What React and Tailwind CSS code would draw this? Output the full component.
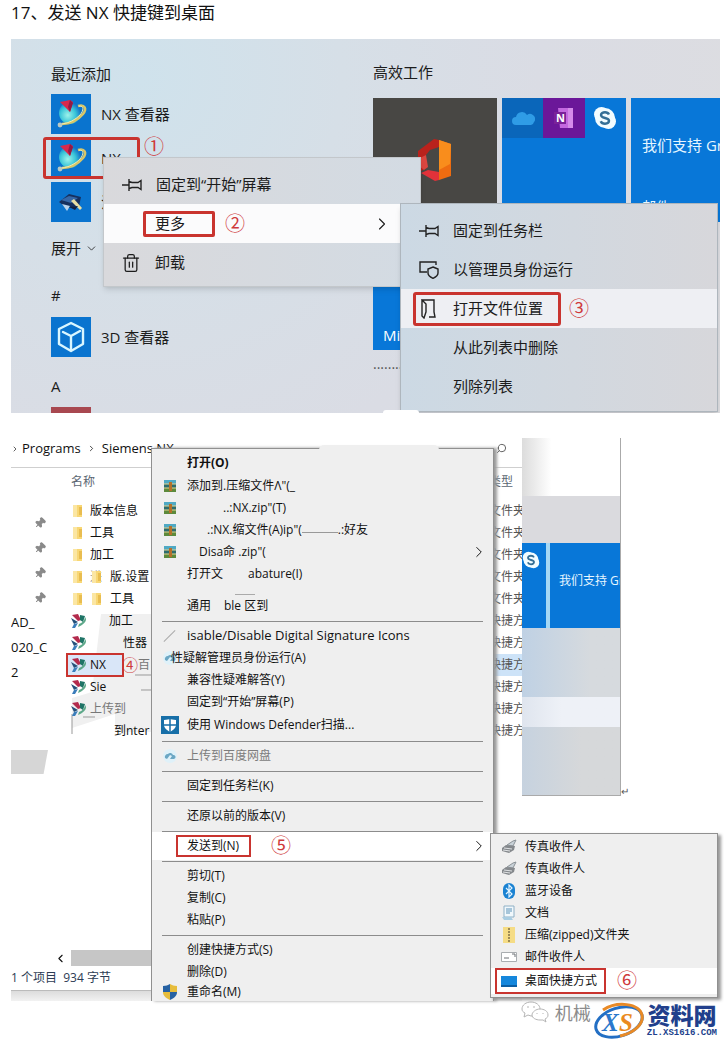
import React from 'react';
import { Pin, Search, ChevronDown, ChevronRight, ChevronLeft, Trash2 } from 'lucide-react';

const fileRows = [
  { icon: 'folder', name: '版本信息', type: '文件夹' },
  { icon: 'folder', name: '工具', type: '文件夹' },
  { icon: 'folder', name: '加工', type: '文件夹' },
  { icon: 'folder', prefix: '进', second: true, name: '版.设置', type: '文件夹' },
  { icon: 'folder', second: true, name: '工具', type: '文件夹' },
  { icon: 'nx', name: '加工', pad: 'pl-[19px]', type: '快捷方式' },
  { icon: 'nx', name: '性器', pad: 'pl-[33px]', type: '快捷方式' },
  { icon: 'nx', name: 'NX', selected: true, type: '快捷方式' },
  { icon: 'nx', name: 'Sie', type: '快捷方式' },
  { icon: 'nx', name: '上传到', muted: true, type: '快捷方式' },
  { name: '到nter', pad: 'pl-[24px]', type: '快捷方式' },
];

const sendTargets = [
  { icon: 'fax', label: '传真收件人' },
  { icon: 'fax', label: '传真收件人' },
  { icon: 'bluetooth', label: '蓝牙设备' },
  { icon: 'doc', label: '文档' },
  { icon: 'zip', label: '压缩(zipped)文件夹' },
  { icon: 'mail', label: '邮件收件人' },
];

const NxLogo = () => (
  <svg viewBox="0 0 40 40" className="size-10 shrink-0 bg-[#0a74cf]">
    <defs>
      <radialGradient id="nxball" cx="0.4" cy="0.6" r="0.6">
        <stop offset="0" stopColor="#9df3ea" />
        <stop offset="0.6" stopColor="#38c4d8" />
        <stop offset="1" stopColor="#1273c8" />
      </radialGradient>
    </defs>
    <ellipse cx="19" cy="19" rx="11" ry="11" fill="url(#nxball)" />
    <path d="M9 8l10-2 3 2-3 10z" fill="#d8284c" />
    <path d="M19 6l3 3-3 9-2-5z" fill="#931a45" />
    <path d="M27 12c7-2 9 3 5 8-5 6-13 10-21 10" fill="none" stroke="#d8c668" strokeWidth="2.6" />
    <path d="M28 12c5 0 5 4 1 9-5 5-11 8-18 9" fill="none" stroke="#f1eeb0" strokeWidth="1" />
    <circle cx="9" cy="31" r="2.4" fill="#b9c9c4" />
  </svg>
);

const ToolLogo = () => (
  <svg viewBox="0 0 40 40" className="size-10 shrink-0 bg-[#0a74cf]">
    <path d="M8 20l10-8 12 3-2 9-12 2z" fill="#16305f" />
    <path d="M10 18l8-4 9 2-7 5z" fill="#3567a8" />
    <path d="M11 22l5 7 3-5z" fill="#b9d4ee" />
    <path d="M20 19l9 9 2-2-8-9z" fill="#e8dfa4" />
    <path d="M18 25l6 3 3-4z" fill="#102040" />
  </svg>
);

const CubeLogo = () => (
  <svg viewBox="0 0 40 40" className="size-10 shrink-0 bg-[#0a74cf]" fill="none" stroke="#d9f6ff" strokeWidth="2.4" strokeLinejoin="round" strokeLinecap="round">
    <path d="M20 6l12 6v15l-12 7-12-7V12z" />
    <path d="M12 15l8 4 9-5M20 19v14" />
  </svg>
);

const OfficeLogo = () => (
  <svg viewBox="0 0 40 46" className="h-[46px] w-10">
    <path d="M3 14L19 2l5 1v7l-9 3-4 5v13l-5 3-3-6z" fill="#b9221c" />
    <path d="M3 28l6 5 4-3-2-12-8 4z" fill="#d9463f" />
    <path d="M24 3l12 4v32l-12 4z" fill="#ee6c10" />
    <path d="M24 3l12 4-1 20-11 6z" fill="#f98d1c" />
    <path d="M6 36l7-3 11 2v8l-4 1z" fill="#e1323a" />
  </svg>
);

const SkypeLogo = ({ className }) => (
  <svg viewBox="0 0 24 24" className={className}>
    <circle cx="8.5" cy="8.5" r="7.5" fill="#f2fcff" />
    <circle cx="15.5" cy="15.5" r="7.5" fill="#f2fcff" />
    <circle cx="12" cy="12" r="10" fill="#f2fcff" />
    <path d="M16 8.500c-.8-1.600-2.300-2.200-4-2.200-2.300 0-4 1-4 2.800 0 4 8 1.800 8 5.700 0 1.900-1.800 2.900-4 2.900-2 0-3.600-.8-4.300-2.500" fill="none" stroke="#356f96" strokeWidth="2.400" />
  </svg>
);

const PushPin = () => (
  <svg viewBox="0 0 20 16" className="h-4 w-5 shrink-0" fill="none" stroke="#222" strokeWidth="1.4">
    <path d="M0 8h7M7 2v12M7 4.500l3 1h6l3-2v9l-3-2h-6l-3 1" />
  </svg>
);

const AdminShield = () => (
  <svg viewBox="0 0 20 18" className="h-[18px] w-5 shrink-0" fill="none" stroke="#222" strokeWidth="1.4">
    <path d="M8 11H1V8M1 8V1h16v3M1 11V8" />
    <path d="M14 6l5 2v4c0 2.500-2 4-5 5.300-3-1.300-5-2.800-5-5.300V8z" />
  </svg>
);

const OpenFolder = () => (
  <svg viewBox="0 0 20 20" className="size-5 shrink-0" fill="none" stroke="#222" strokeWidth="1.4">
    <path d="M3 1h12v12l1 5h-6M3 1l4 4v8l-2 6-2-2z" />
  </svg>
);

const FolderIcon = () => (
  <svg viewBox="0 0 14 16" className="h-4 w-[14px] shrink-0">
    <path d="M2 2h9v12H2z" fill="#f8d775" />
    <path d="M2 2h4v12H2z" fill="#fbe6a3" />
    <path d="M8 4h3v8H8z" fill="#e9bd50" />
  </svg>
);

const NxFileIcon = () => (
  <svg viewBox="0 0 16 16" className="size-4 shrink-0">
    <path d="M1 2l6-1 3 6-3 1z" fill="#b32b4d" />
    <path d="M9 2l5 1-2 6-3-2z" fill="#1f7466" />
    <path d="M0 5l7 4-4 2z" fill="#24507a" />
    <path d="M7 10l-3 5H1l2-4z" fill="#3a7dbb" />
    <path d="M14 4c3 3-1 8-7 10l1-3c3-1 6-4 6-7z" fill="#5da889" />
  </svg>
);

const RarIcon = () => (
  <svg viewBox="0 0 14 14" className="size-[14px]">
    <path d="M1 1h12v4H1z" fill="#4fa9c4" />
    <path d="M1 5h12v4H1z" fill="#2d6d6e" />
    <path d="M1 9h12v4H1z" fill="#5d8a3c" />
    <path d="M1 4.500h12v1H1zM1 8.500h12v1H1z" fill="#e8d58c" />
    <path d="M6 3h3v9H6z" fill="#b5702a" />
  </svg>
);

const CloudIcon = () => (
  <svg viewBox="0 0 16 16" className="size-4">
    <circle cx="8" cy="8" r="7" fill="#dff1f9" />
    <path d="M3 10a3 3 0 013-4 3 3 0 015 1 2 2 0 011 4H8l2-3-2-1-3 4z" fill="#6ba7c4" />
  </svg>
);

const DefenderIcon = () => (
  <svg viewBox="0 0 18 18" className="size-[18px]">
    <path d="M0 0h18v18H0z" fill="#176fa8" />
    <path d="M3 4c3 0 5-1 6-1s3 1 6 1v5c0 3-3 5-6 7-3-2-6-4-6-7z" fill="#fff" />
    <path d="M9 3v13M3 9h12" stroke="#176fa8" strokeWidth="1.500" />
  </svg>
);

const ShieldIcon = () => (
  <svg viewBox="0 0 16 16" className="size-4">
    <path d="M8 0v8H1V2c3 0 5-1 7-2z" fill="#2762a3" />
    <path d="M8 0v8h7V2c-3 0-5-1-7-2z" fill="#e7bd3c" />
    <path d="M8 8v8c-4-2-7-4-7-8z" fill="#e7bd3c" />
    <path d="M8 8v8c4-2 7-4 7-8z" fill="#2762a3" />
  </svg>
);

const TargetIcon = ({ type }) => {
  if (type === 'fax') {
    return (
      <svg viewBox="0 0 16 16" className="size-4 shrink-0">
        <path d="M6 6l6-4 3-1-3 6z" fill="#c9d2d8" stroke="#8b9297" />
        <path d="M1 9l4-3 9 1-1 4-5 3-7-2z" fill="#85898d" />
        <path d="M3 9l8 1M2 11l7 1" stroke="#dfe2e4" />
      </svg>
    );
  }
  if (type === 'bluetooth') {
    return (
      <svg viewBox="0 0 16 16" className="size-4 shrink-0">
        <rect x="2" width="12" height="16" rx="6" fill="#1a82d2" />
        <path d="M5 5l6 6-3 3V2l3 3-6 6" fill="none" stroke="#e3f4ff" strokeWidth="1.200" />
      </svg>
    );
  }
  if (type === 'doc') {
    return (
      <svg viewBox="0 0 16 16" className="size-4 shrink-0">
        <path d="M3 1h10v11H3z" fill="#f1f8fc" stroke="#8fb0c5" />
        <path d="M5 4h6M5 6h6M5 8h4" stroke="#5d93b8" />
        <path d="M1 12h9l2 3H3z" fill="#a9cde2" />
      </svg>
    );
  }
  if (type === 'zip') {
    return (
      <svg viewBox="0 0 16 16" className="size-4 shrink-0">
        <path d="M2 0h12v16H2z" fill="#f5dc85" />
        <path d="M8 1v14" stroke="#9d8b55" strokeWidth="2" strokeDasharray="2 1" />
      </svg>
    );
  }
  if (type === 'mail') {
    return (
      <svg viewBox="0 0 16 16" className="size-4 shrink-0">
        <path d="M.5 3.500h15v9H.5z" fill="#fff" stroke="#a9adb0" />
        <path d="M11 5h3v3M3 9h5" fill="none" stroke="#6c7175" />
      </svg>
    );
  }
  return (
    <svg viewBox="0 0 16 16" className="size-4 shrink-0">
      <path d="M0 3h16v11H0z" fill="#1587dc" />
      <path d="M0 12h16v2H0z" fill="#0b5ea3" />
    </svg>
  );
};

const Step = ({ children, className = '', size = 'text-xl' }) => (
  <span className={`${size} leading-none text-[#cf3a3c] ${className}`}>{children}</span>
);

const Separator = () => <hr className="mx-[10px] mt-1 mb-[3px] border-t border-[#8c8c8c]" />;

const MenuRow = ({ icon, children, className = 'h-[22px]' }) => (
  <button type="button" className={`flex w-full items-center text-left whitespace-nowrap ${className}`}>
    <span className="flex w-[35px] shrink-0 justify-center">{icon}</span>
    {children}
  </button>
);

const StartMenu = () => (
  <section className="relative flex overflow-hidden bg-[radial-gradient(circle_at_130px_40px,#cfe2ec_0%,#d6dfe7_30%,#dadce4_60%,#dddde0_100%)] text-[15px] text-[#1c1c1c]">
    <div className="w-[362px] shrink-0 pt-[15px] pl-10">
      <h2 className="flex h-10 items-center">最近添加</h2>
      <ul className="flex flex-col gap-1">
        <li className="flex items-center gap-[10px]"><NxLogo />NX 查看器</li>
        <li className="flex items-center gap-[10px]"><NxLogo />NX</li>
        <li className="flex items-center gap-[10px]"><ToolLogo />注</li>
      </ul>
      <button type="button" className="flex h-[52px] items-center gap-1">
        展开 <ChevronDown size={13} strokeWidth={1.5} />
      </button>
      <h3 className="flex h-[43px] items-center">#</h3>
      <div className="flex items-center gap-[10px]"><CubeLogo />3D 查看器</div>
      <h3 className="flex h-[50px] items-center pt-2">A</h3>
      <div className="h-[6px] w-10 bg-[#a84850]" />
    </div>

    <div className="min-w-0 flex-1 overflow-hidden pt-[13px]">
      <h2 className="flex h-10 items-center">高效工作</h2>
      <div className="mt-[6px] grid grid-cols-[124px_124px_124px] gap-x-[5px] gap-y-1">
        <div className="flex h-[124px] items-center justify-center bg-[#484744]"><OfficeLogo /></div>
        <div className="h-[124px] bg-[#0877d8]">
          <div className="grid h-10 grid-cols-3">
            <span className="flex items-center justify-center bg-[#0a66ba]">
              <svg viewBox="0 0 24 16" className="h-4 w-6">
                <path d="M5 15a4 4 0 010-8 6 6 0 0111-2 5 5 0 017 7 4 4 0 01-3 3z" fill="#2f9ce6" />
              </svg>
            </span>
            <span className="flex items-center justify-center bg-[#6b1799]">
              <svg viewBox="0 0 24 24" className="size-6">
                <path d="M6 2h15v20H8z" fill="#c468e0" />
                <path d="M16 2h5v20h-5z" fill="#d58bea" />
                <path d="M2 6h12v12H2z" fill="#7a2299" />
                <text x="4" y="16" fontSize="11" fontWeight="700" fill="#fff">N</text>
              </svg>
            </span>
            <span className="flex items-center justify-center"><SkypeLogo className="size-6" /></span>
          </div>
        </div>
        <div className="flex h-[124px] flex-col bg-[#0877d8] pt-9 pl-[11px] whitespace-nowrap text-[#e6f6ff]">
          <span>我们支持 Gr</span>
          <span className="mt-10 text-sm">邮件</span>
        </div>
        <div className="flex h-[124px] items-end bg-[#0877d8] pb-1 pl-[10px] text-white">Mi</div>
      </div>
      <p className="h-[34px] pt-1 text-sm text-[#555]">...........</p>
    </div>

    {/* step 1 highlight */}
    <div className="absolute top-[98px] left-8 h-[42px] w-[97px] rounded-[3px] border-[3px] border-[#c9342f]" />
    <Step className="absolute top-[98px] left-[133px]">①</Step>

    <div className="absolute top-[118px] left-[92px] w-[318px] border border-[#c3c7cb] bg-linear-to-r from-[#d9d9dc] to-[#d3dbe3] pt-[7px] pb-1 shadow-md">
      <button type="button" className="flex h-[39px] w-full items-center gap-[14px] pl-[18px]"><PushPin />固定到“开始”屏幕</button>
      <button type="button" className="flex h-[39px] w-full items-center bg-[#fbfbfc] pr-7 pl-[39px]">
        <span className="flex h-[26px] w-[72px] items-center rounded-[2px] border-[3px] border-[#c9342f] pl-[9px]">更多</span>
        <Step className="ml-[10px]">②</Step>
        <ChevronRight size={20} strokeWidth={1.3} className="ml-auto" />
      </button>
      <button type="button" className="flex h-[39px] w-full items-center gap-[14px] pl-[17px]"><Trash2 size={20} strokeWidth={1.5} />卸载</button>
    </div>

    <div className="absolute top-[164px] left-[389px] w-[318px] border border-[#aeb6bd] bg-linear-to-r from-[#ccd9e4] to-[#d7d7db] pt-[7px] pb-[5px] shadow-md">
      <button type="button" className="flex h-[39px] w-full items-center gap-[14px] pl-[18px]"><PushPin />固定到任务栏</button>
      <button type="button" className="flex h-[39px] w-full items-center gap-[14px] pl-[18px]"><AdminShield />以管理员身份运行</button>
      <button type="button" className="flex h-[39px] w-full items-center bg-[#eeeff3] pl-3">
        <span className="flex h-[34px] w-[148px] items-center gap-[14px] rounded-[3px] border-[3px] border-[#c9342f] pl-[3px]">
          <OpenFolder />打开文件位置
        </span>
        <Step className="ml-2">③</Step>
      </button>
      <button type="button" className="flex h-[39px] w-full items-center pl-[52px]">从此列表中删除</button>
      <button type="button" className="flex h-[39px] w-full items-center pl-[52px]">列除列表</button>
    </div>
    <div className="absolute bottom-0 left-[372px] h-[3px] w-9 rounded-t-full bg-white" />
  </section>
);

const FileName = ({ row }) => (
  <div className={`relative flex h-[22px] items-center whitespace-nowrap ${row.muted ? 'text-[#777]' : ''}`}>
    {row.selected && <span className="absolute -left-[5px] h-6 w-[58px] border-2 border-[#c9342f] bg-[#d9e6f8]" />}
    <span className="relative flex w-[19px] shrink-0">
      {row.icon === 'folder' && <FolderIcon />}
      {row.icon === 'nx' && <NxFileIcon />}
    </span>
    {row.prefix && <span className="w-0 text-[#999]">{row.prefix}</span>}
    {row.second && <span className="flex w-5"><FolderIcon /></span>}
    <span className={`relative ${row.pad || ''}`}>{row.name}</span>
    {row.selected && (
      <>
        <Step size="text-base" className="relative ml-4">④</Step>
        <span className="relative text-[#777]">百</span>
      </>
    )}
  </div>
);

const Explorer = () => (
  <div className="flex w-[511px] flex-col [grid-area:1/1]">
    <nav className="flex h-[30px] items-center border-b border-[#cfcfcf] pb-2 text-[13px]">
      <ChevronRight size={8} className="mr-[3px]" />
      <a href="#programs">Programs</a>
      <ChevronRight size={9} className="mx-[6px]" />
      <a href="#nx">Siemens NX</a>
      <Search size={11} className="mr-[15px] ml-auto -scale-x-100 text-[#555]" />
    </nav>
    <div className="flex">
      <div className="w-[60px] shrink-0 overflow-hidden pt-[42px] text-[13px]">
        {[0, 1, 2, 3].map((i) => (
          <div key={i} className="flex h-[25px] items-center justify-end pr-[25px]">
            <Pin size={12} className="rotate-45 fill-[#8a8a8a] text-[#8a8a8a]" />
          </div>
        ))}
        <p className="flex h-[25px] items-center">AD_</p>
        <p className="flex h-[25px] items-center">020_C</p>
        <p className="flex h-[25px] items-center">2</p>
        <div className="mt-[65px] h-6 w-[37px] bg-[#d6d6d6] [clip-path:polygon(0_0,100%_0,88%_100%,0_100%)]" />
      </div>
      <div className="relative min-w-0 flex-1">
        <svg viewBox="0 0 80 120" className="absolute top-[146px] left-0 h-[120px] w-20" preserveAspectRatio="none">
          <path d="M30 0h50v118H44V100L1 114V84l20-6z" fill="#f0f0f0" />
          <path d="M64 61h16M70 76h10M12 103h12M1 100v20" stroke="#999" />
        </svg>
        <table className="relative w-full table-fixed border-collapse text-[12px]">
          <thead>
            <tr className="h-8 text-[#5b6672]">
              <th className="p-0 pb-1 text-left font-normal">名称</th>
              <th className="w-[33px] p-0 pb-1 text-left font-normal">类型</th>
            </tr>
          </thead>
          <tbody>
            {fileRows.map((row, i) => (
              <tr key={i} className="h-[22px]">
                <td className="p-0"><FileName row={row} /></td>
                <td className={`overflow-hidden p-0 whitespace-nowrap text-[#555] ${row.selected ? 'bg-[#cde3f8]' : ''}`}>{row.type}</td>
              </tr>
            ))}
          </tbody>
        </table>
      </div>
    </div>
    <div className="mt-auto ml-[43px] flex h-4 items-center">
      <ChevronLeft size={13} />
      <span className="ml-1 h-full flex-1 bg-[#c6c6c6]" />
    </div>
    <p className="flex h-6 items-center text-[12px] whitespace-pre text-[#2d3c54]">1 个项目  934 字节</p>
    <div className="h-[11px] border-t border-[#bbb] bg-linear-to-b from-[#dcdcdc] to-[#f2f2f2]" />
  </div>
);

const WindowSlice = () => (
  <div className="ml-[511px] flex h-[358px] items-end text-[12px] [grid-area:1/1]">
    <div className="flex h-full w-[99px] flex-col overflow-hidden border-r border-b border-[#aaa]">
      <div className="h-[58px] bg-linear-to-r from-[#dcdcdc] to-white to-30%" />
      <div className="h-[47px] bg-[#dadade]" />
      <div className="flex h-[85px] gap-1 bg-[#a5d8f5]">
        <div className="w-6 shrink-0 bg-[#0877d8] pt-2"><SkypeLogo className="size-[18px]" /></div>
        <div className="flex-1 bg-[#0877d8] pt-[29px] pl-[9px] whitespace-nowrap text-[#e6f6ff]">我们支持 Gr</div>
      </div>
      <div className="h-[69px] bg-linear-to-r from-[#bfd1e4] to-[#d6dade] to-70%" />
      <div className="h-[30px] bg-linear-to-r from-[#dfe5ee] to-[#eef1f7] to-40%" />
      <div className="flex-1 bg-linear-to-r from-[#c6d2df] to-[#d6d8da] to-60%" />
    </div>
    <span className="text-[10px] leading-none text-[#555]">↵</span>
  </div>
);

const ContextMenu = () => (
  <div className="relative mt-[10px] ml-[140px] w-[343px] border-x border-t border-[#909090] bg-[#efefef] pt-[2px] text-[12px] text-[#111] shadow-[3px_0_3px_#999] [grid-area:1/1]">
    <div className="absolute -top-1 right-[54px] h-[5px] w-[120px] rounded-t-full bg-[#efefef]" />
    <MenuRow className="h-6 font-bold">打开(O)</MenuRow>
    <MenuRow icon={<RarIcon />}>添加到.压缩文件Λ"(_</MenuRow>
    <MenuRow icon={<RarIcon />}><span className="pl-9">..:NX.zip"(T)</span></MenuRow>
    <MenuRow icon={<RarIcon />}><span className="pl-5">.:NX.缩文件(A)ip"(</span><span className="mt-1 h-px w-9 bg-[#999]" />.:好友</MenuRow>
    <MenuRow icon={<RarIcon />}>
      <span className="pl-3">Disa命 .zip"(</span>
      <ChevronRight size={18} strokeWidth={1.3} className="mr-[5px] ml-auto" />
    </MenuRow>
    <MenuRow><span className="w-[61px]">打开文</span>abature(I)</MenuRow>
    <div className="ml-[83px] h-[10px] w-5 border-b border-[#aaa]" />
    <MenuRow><span className="w-[37px]">通用</span>ble 区到</MenuRow>
    <Separator />
    <MenuRow icon={<span className="h-4 w-px rotate-45 bg-[#aaa]" />}>
      <span className="text-[13px]">isable/Disable Digital Signature Icons</span>
    </MenuRow>
    <MenuRow icon={<CloudIcon />}><span className="-ml-4">性疑解管理员身份运行(A)</span></MenuRow>
    <MenuRow>兼容性疑难解答(Y)</MenuRow>
    <MenuRow>固定到“开始”屏幕(P)</MenuRow>
    <MenuRow className="h-6" icon={<DefenderIcon />}>使用 Windows Defender扫描...</MenuRow>
    <Separator />
    <MenuRow icon={<CloudIcon />}><span className="text-[#7c7c7c]">上传到百度网盘</span></MenuRow>
    <Separator />
    <MenuRow>固定到任务栏(K)</MenuRow>
    <Separator />
    <MenuRow>还原以前的版本(V)</MenuRow>
    <Separator />
    <div className="-my-[3px] bg-white py-[3px]">
      <button type="button" className="flex h-[22px] w-full items-center pr-[5px] pl-6 text-left">
        <span className="flex h-[22px] w-[75px] items-center border-2 border-[#c9342f] pl-[9px]">发送到(N)</span>
        <Step className="ml-5">⑤</Step>
        <ChevronRight size={18} strokeWidth={1.3} className="ml-auto" />
      </button>
    </div>
    <Separator />
    <MenuRow>剪切(T)</MenuRow>
    <MenuRow>复制(C)</MenuRow>
    <MenuRow>粘贴(P)</MenuRow>
    <Separator />
    <MenuRow>创建快捷方式(S)</MenuRow>
    <MenuRow>删除(D)</MenuRow>
    <MenuRow className="h-[18px]" icon={<ShieldIcon />}>重命名(M)</MenuRow>

    <div className="absolute bottom-[3px] left-[338px] w-[228px] border border-[#909090] bg-[#efefef] pt-[2px] pb-[3px] shadow-[3px_2px_3px_#999]">
      {sendTargets.map((target, i) => (
        <button key={i} type="button" className="flex h-[22px] w-full items-center gap-2 pl-[10px] whitespace-nowrap">
          <TargetIcon type={target.icon} />{target.label}
        </button>
      ))}
      <button type="button" className="flex h-[26px] w-full items-center bg-white pl-1">
        <span className="flex h-[26px] w-[111px] items-center gap-2 border-2 border-[#c9342f] pl-1 whitespace-nowrap">
          <TargetIcon type="desktop" />桌面快捷方式
        </span>
        <Step className="ml-[11px]">⑥</Step>
      </button>
    </div>
  </div>
);

const Watermark = () => (
  <footer className="flex h-10 items-start justify-end pr-[3px]">
    <svg viewBox="0 0 28 22" className="h-[22px] w-7" fill="#fff" stroke="#b5b5b5">
      <path d="M10 1c5 0 9 3 9 7s-4 7-9 7l-3-1-4 2 1-4C2 11 1 10 1 8c0-4 4-7 9-7z" />
      <path d="M19 8c4 0 8 2 8 6 0 2-1 3-3 4l1 3-3-2h-3c-4 0-8-2-8-5s4-6 8-6z" />
      <path d="M7 5v2M13 5v2M16 12v1M22 12v1" />
    </svg>
    <span className="ml-[6px] text-lg leading-6 text-[#8c8c8c]">机械</span>
    <svg viewBox="0 0 56 40" className="h-10 w-14">
      <ellipse cx="28" cy="21" rx="24" ry="14" transform="rotate(-18 28 21)" fill="#fff" stroke="#236fc4" strokeWidth="3" />
      <path d="M12 9C26 0 48 2 51 14c2 9-8 18-22 21" fill="none" stroke="#e98a26" strokeWidth="3" />
      <text x="11" y="30" fontSize="25" fontStyle="italic" fontFamily="Liberation Serif" fontWeight="700" fill="#2a78cc">X</text>
      <text x="28" y="30" fontSize="25" fontStyle="italic" fontFamily="Liberation Serif" fontWeight="700" fill="#ea8a20">S</text>
    </svg>
    <span className="flex flex-col items-center text-[#213f8c]">
      <b className="text-[23px] leading-[28px] font-black">资料网</b>
      <span className="font-['Liberation_Mono'] text-[9px] leading-none font-bold">ZL.XS1616.COM</span>
    </span>
  </footer>
);

export default function App() {
  return (
    <main className="min-h-screen bg-white pr-1 pl-[11px] font-['Open_Sans','Noto_Sans_CJK_SC',sans-serif] text-[#111]">
      <h1 className="pt-px pb-[14px] text-[17px] leading-6">17、发送 NX 快捷键到桌面</h1>
      <StartMenu />
      <section className="relative mt-[25px] grid grid-cols-1">
        <Explorer />
        <WindowSlice />
        <ContextMenu />
      </section>
      <Watermark />
    </main>
  );
}
